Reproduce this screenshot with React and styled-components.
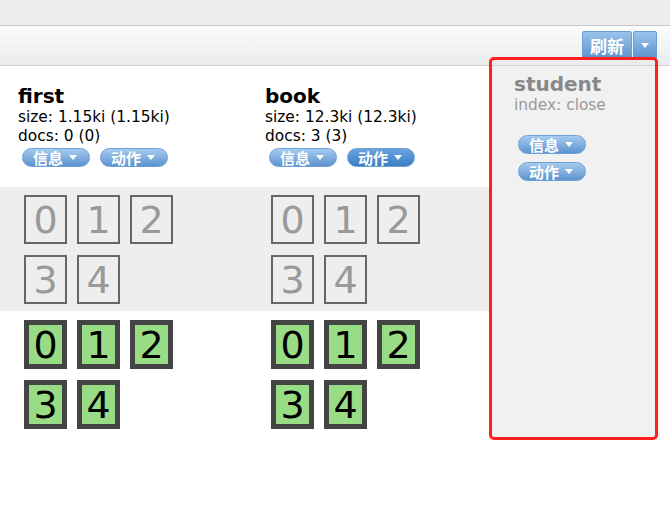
import React from 'react'
import styled, { createGlobalStyle } from 'styled-components'

const Global = createGlobalStyle`
  html, body { margin: 0; padding: 0; background: #fff; }
  body { font-family: "DejaVu Sans", Verdana, "Noto Sans CJK SC", sans-serif; }
`

const indices = [
  { name: 'first', size: '1.15ki (1.15ki)', docs: '0 (0)' },
  { name: 'book', size: '12.3ki (12.3ki)', docs: '3 (3)', active: true },
]

const shards = [0, 1, 2, 3, 4]

const Page = styled.div`
  position: relative;
  width: 670px;
  height: 527px;
  overflow: hidden;
`
const TopBar = styled.div`
  height: 25px;
  background: #eeeeee;
  border-bottom: 1px solid #c6c6c6;
`
const Toolbar = styled.div`
  height: 40px;
  box-sizing: border-box;
  background: linear-gradient(#fbfcfc, #e9ebed);
  border-bottom: 1px solid #d0d0d0;
  display: flex;
  justify-content: flex-end;
  align-items: flex-start;
  padding: 5px 13px 0 0;
  gap: 1px;
`
const ToolButton = styled.div`
  height: 29px;
  box-sizing: border-box;
  border: 1px solid #6a9bd3;
  border-radius: 2px;
  background: linear-gradient(#9ac2ea, #5b93cf);
  color: #fff;
  font-weight: bold;
  font-size: 17px;
  font-family: "Noto Sans CJK SC", sans-serif;
  display: flex;
  align-items: center;
  justify-content: center;
  width: ${p => p.w}px;
`
const Caret = styled.span`
  display: inline-block;
  width: 0;
  height: 0;
  border-left: 4px solid transparent;
  border-right: 4px solid transparent;
  border-top: 5px solid #fff;
`
const Grid = styled.div`
  display: grid;
  grid-template-columns: 247px 243px 170px;
  grid-template-rows: 121px 124px auto;
`
const Head = styled.div`
  padding: 18px 0 0 18px;
`
const Name = styled.div`
  font-size: 20px;
  font-weight: bold;
  color: ${p => (p.closed ? '#888' : '#000')};
  line-height: 24px;
`
const Info = styled.div`
  font-size: 15.4px;
  line-height: 18.5px;
  color: ${p => (p.closed ? '#999' : '#000')};
`
const Buttons = styled.div`
  display: flex;
  flex-direction: ${p => (p.column ? 'column' : 'row')};
  gap: ${p => (p.column ? 8 : 10)}px;
  margin: ${p => (p.column ? '20px 0 0 4px' : '3px 0 0 4px')};
`
const Pill = styled.div`
  width: 68px;
  height: 19px;
  box-sizing: border-box;
  border: 1px solid #6c9fd6;
  border-radius: 10px;
  background: ${p => (p.dark ? 'linear-gradient(#6aa3dd, #3c7ec6)' : 'linear-gradient(#a6cbef, #5d93d0)')};
  color: #fff;
  font-weight: bold;
  font-size: 15px;
  line-height: 17px;
  display: flex;
  align-items: center;
  padding-left: 10px;
  gap: 6px;
  font-family: "Noto Sans CJK SC", sans-serif;
`
const Band = styled.div`
  background: ${p => (p.gray ? '#eeeeee' : '#fff')};
  padding: ${p => (p.gray ? '8px 0 0 24px' : '9px 0 0 24px')};
  display: grid;
  grid-template-columns: repeat(3, 43px);
  grid-auto-rows: 49px;
  column-gap: 10px;
  row-gap: 11px;
  align-content: start;
`
const Shard = styled.div`
  box-sizing: border-box;
  border: ${p => (p.started ? '5px solid #444' : '2px solid #666')};
  background: ${p => (p.started ? '#98dc85' : 'transparent')};
  color: ${p => (p.started ? '#000' : '#999')};
  font-size: 38px;
  display: flex;
  align-items: center;
  justify-content: center;
  line-height: 1;
`
const Closed = styled.div`
  grid-column: 3;
  grid-row: 1 / span 3;
  background: #f1f1f1;
  height: 373px;
  padding: 6px 0 0 24px;
  box-sizing: border-box;
`
const Highlight = styled.div`
  position: absolute;
  left: 489px;
  top: 57px;
  width: 169px;
  height: 383px;
  box-sizing: border-box;
  border: 3px solid #ff1f1f;
  border-radius: 5px;
`

const MenuButton = ({ label, dark }) => (
  <Pill dark={dark}>
    <span>{label}</span>
    <Caret />
  </Pill>
)

export default function App() {
  return (
    <Page>
      <Global />
      <TopBar />
      <Toolbar>
        <ToolButton w={50}>刷新</ToolButton>
        <ToolButton w={24}><Caret /></ToolButton>
      </Toolbar>
      <Grid>
        {indices.map(ix => (
          <Head key={ix.name}>
            <Name>{ix.name}</Name>
            <Info>size: {ix.size}</Info>
            <Info>docs: {ix.docs}</Info>
            <Buttons>
              <MenuButton label="信息" />
              <MenuButton label="动作" dark={ix.active} />
            </Buttons>
          </Head>
        ))}
        <Closed>
          <Name closed>student</Name>
          <Info closed>index: close</Info>
          <Buttons column>
            <MenuButton label="信息" />
            <MenuButton label="动作" />
          </Buttons>
        </Closed>
        {indices.map(ix => (
          <Band gray key={ix.name + 'u'}>
            {shards.map(n => <Shard key={n}>{n}</Shard>)}
          </Band>
        ))}
        {indices.map(ix => (
          <Band key={ix.name + 's'}>
            {shards.map(n => <Shard started key={n}>{n}</Shard>)}
          </Band>
        ))}
      </Grid>
      <Highlight />
    </Page>
  )
}
